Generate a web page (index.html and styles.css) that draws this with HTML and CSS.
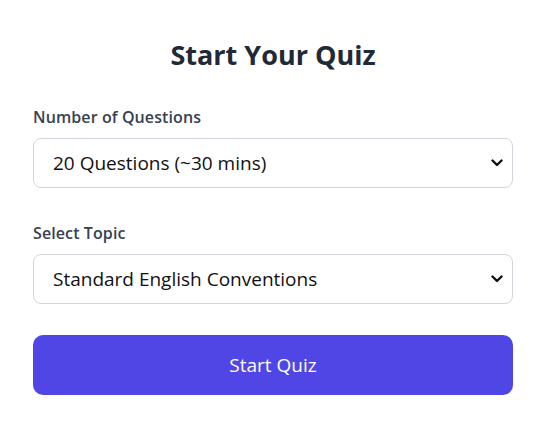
FILE: index.html
```html
<!DOCTYPE html>
<html lang="en">
<head>
<meta charset="utf-8">
<title>Start Your Quiz</title>
<link rel="stylesheet" href="styles.css">
</head>
<body>
<main class="quiz">
  <h1 class="quiz-title">Start Your Quiz</h1>
  <div class="field">
    <label class="field-label" for="count">Number of Questions</label>
    <div class="select-wrap">
      <select id="count" class="select">
        <option>20 Questions (~30 mins)</option>
      </select>
      <svg class="chevron" viewBox="0 0 12 8" width="12" height="8" aria-hidden="true"><path d="M1.5 1.5 L6 6 L10.5 1.5" fill="none" stroke="#111" stroke-width="2.4" stroke-linecap="round" stroke-linejoin="round"/></svg>
    </div>
  </div>
  <div class="field">
    <label class="field-label" for="topic">Select Topic</label>
    <div class="select-wrap">
      <select id="topic" class="select">
        <option>Standard English Conventions</option>
      </select>
      <svg class="chevron" viewBox="0 0 12 8" width="12" height="8" aria-hidden="true"><path d="M1.5 1.5 L6 6 L10.5 1.5" fill="none" stroke="#111" stroke-width="2.4" stroke-linecap="round" stroke-linejoin="round"/></svg>
    </div>
  </div>
  <button class="start-btn" type="button">Start Quiz</button>
</main>
</body>
</html>
```
FILE: styles.css
```css
* { box-sizing: border-box; }
html, body { margin: 0; background: #ffffff; }
body {
  font-family: "Open Sans", "Noto Sans", sans-serif;
  color: #1f2937;
}
.quiz {
  width: 480px;
  margin-left: 33px;
  padding-top: 37px;
  display: flex;
  flex-direction: column;
}
.quiz-title {
  margin: 0 0 32px;
  font-size: 27px;
  line-height: 36px;
  font-weight: 700;
  text-align: center;
  color: #1f2937;
}
.field {
  display: flex;
  flex-direction: column;
  gap: 9px;
  margin-bottom: 32px;
}
.field:first-of-type { margin-bottom: 33px; }
.field-label {
  font-size: 16px;
  line-height: 24px;
  font-weight: 600;
  letter-spacing: 0.1px;
  color: #374151;
}
.select-wrap { position: relative; }
.select {
  appearance: none;
  -webkit-appearance: none;
  width: 100%;
  height: 50px;
  padding: 0 36px 0 19px;
  font-family: inherit;
  font-size: 19px;
  color: #111111;
  background: #ffffff;
  border: 1px solid #d1d5db;
  border-radius: 8px;
}
.chevron {
  position: absolute;
  right: 10px;
  top: 21px;
  pointer-events: none;
}
.start-btn {
  height: 60px;
  margin-top: -1px;
  border: 0;
  border-radius: 10px;
  background: #4f46e5;
  color: #ffffff;
  font-family: inherit;
  font-size: 19px;
}
```
